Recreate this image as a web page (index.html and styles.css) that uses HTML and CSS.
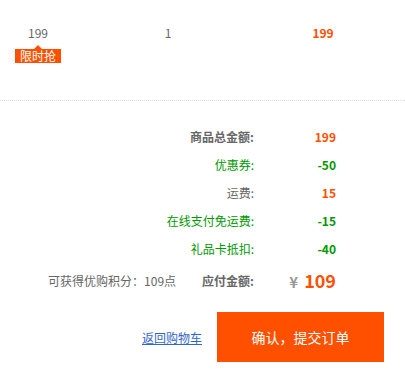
FILE: index.html
```html
<!DOCTYPE html>
<html>
<head>
<meta charset="utf-8">
<link rel="stylesheet" href="styles.css">
</head>
<body>
<div class="item">
  <div class="cell price">
    <span class="num">199</span>
    <span class="badge">限时抢</span>
  </div>
  <div class="cell qty"><span class="num">1</span></div>
  <div class="cell sub"><span class="num orange bold">199</span></div>
</div>
<div class="summary">
  <div class="row"><span class="label bold">商品总金额:</span><span class="val orange bold">199</span></div>
  <div class="row green"><span class="label">优惠券:</span><span class="val bold">-50</span></div>
  <div class="row"><span class="label">运费:</span><span class="val orange bold">15</span></div>
  <div class="row green"><span class="label">在线支付免运费:</span><span class="val bold">-15</span></div>
  <div class="row green"><span class="label">礼品卡抵扣:</span><span class="val bold">-40</span></div>
  <div class="row total">
    <span class="points">可获得优购积分：<span class="pnum">109点</span></span>
    <span class="label bold">应付金额:</span>
    <span class="val"><span class="yen">¥</span><span class="big">109</span></span>
  </div>
</div>
<div class="actions">
  <a class="back" href="#">返回购物车</a>
  <button class="submit">确认，提交订单</button>
</div>
</body>
</html>
```
FILE: styles.css
```css
* { box-sizing: border-box; }
body {
  margin: 0;
  font-family: "Noto Sans CJK SC", "Liberation Sans", sans-serif;
  font-size: 12px;
  color: #666;
  background: #fff;
}
.item {
  display: grid;
  grid-template-columns: 76px 184px 126px;
  height: 101px;
  padding-top: 24px;
  border-bottom: 1px dotted #ddd;
}
.cell {
  display: flex;
  flex-direction: column;
  align-items: center;
}
.num { line-height: 18px; }
.badge {
  position: relative;
  margin-top: 7px;
  background: #ff5000;
  color: #fff;
  width: 46px;
  height: 14px;
  line-height: 14px;
  text-align: center;
  font-size: 12px;
}
.badge::before {
  content: "";
  position: absolute;
  left: 19px;
  top: -4px;
  border-left: 4px solid transparent;
  border-right: 4px solid transparent;
  border-bottom: 4px solid #ff5000;
}
.orange { color: #ff5000; }
.bold { font-weight: bold; }
.green { color: #009900; }
.summary {
  padding-top: 21px;
  padding-right: 69px;
}
.row {
  display: flex;
  justify-content: flex-end;
  align-items: center;
  height: 28px;
}
.label { text-align: right; }
.val { width: 82px; text-align: right; }
.total { height: 36px; }
.points { margin-right: 26px; }
.pnum { color: #666; }
.yen { color: #999; font-weight: bold; font-size: 15px; margin-right: 6px; }
.big { color: #ff5000; font-weight: bold; font-size: 18px; }
.actions {
  display: flex;
  justify-content: flex-end;
  align-items: center;
  padding-top: 14px;
  padding-right: 21px;
}
.back {
  color: #3366cc;
  text-decoration: underline;
  margin-right: 15px;
  font-size: 12px;
}
.submit {
  width: 167px;
  height: 50px;
  border: 0;
  background: #ff5000;
  color: #fff;
  font-family: "Noto Sans CJK SC", sans-serif;
  font-size: 14px;
  padding: 0;
}
```
